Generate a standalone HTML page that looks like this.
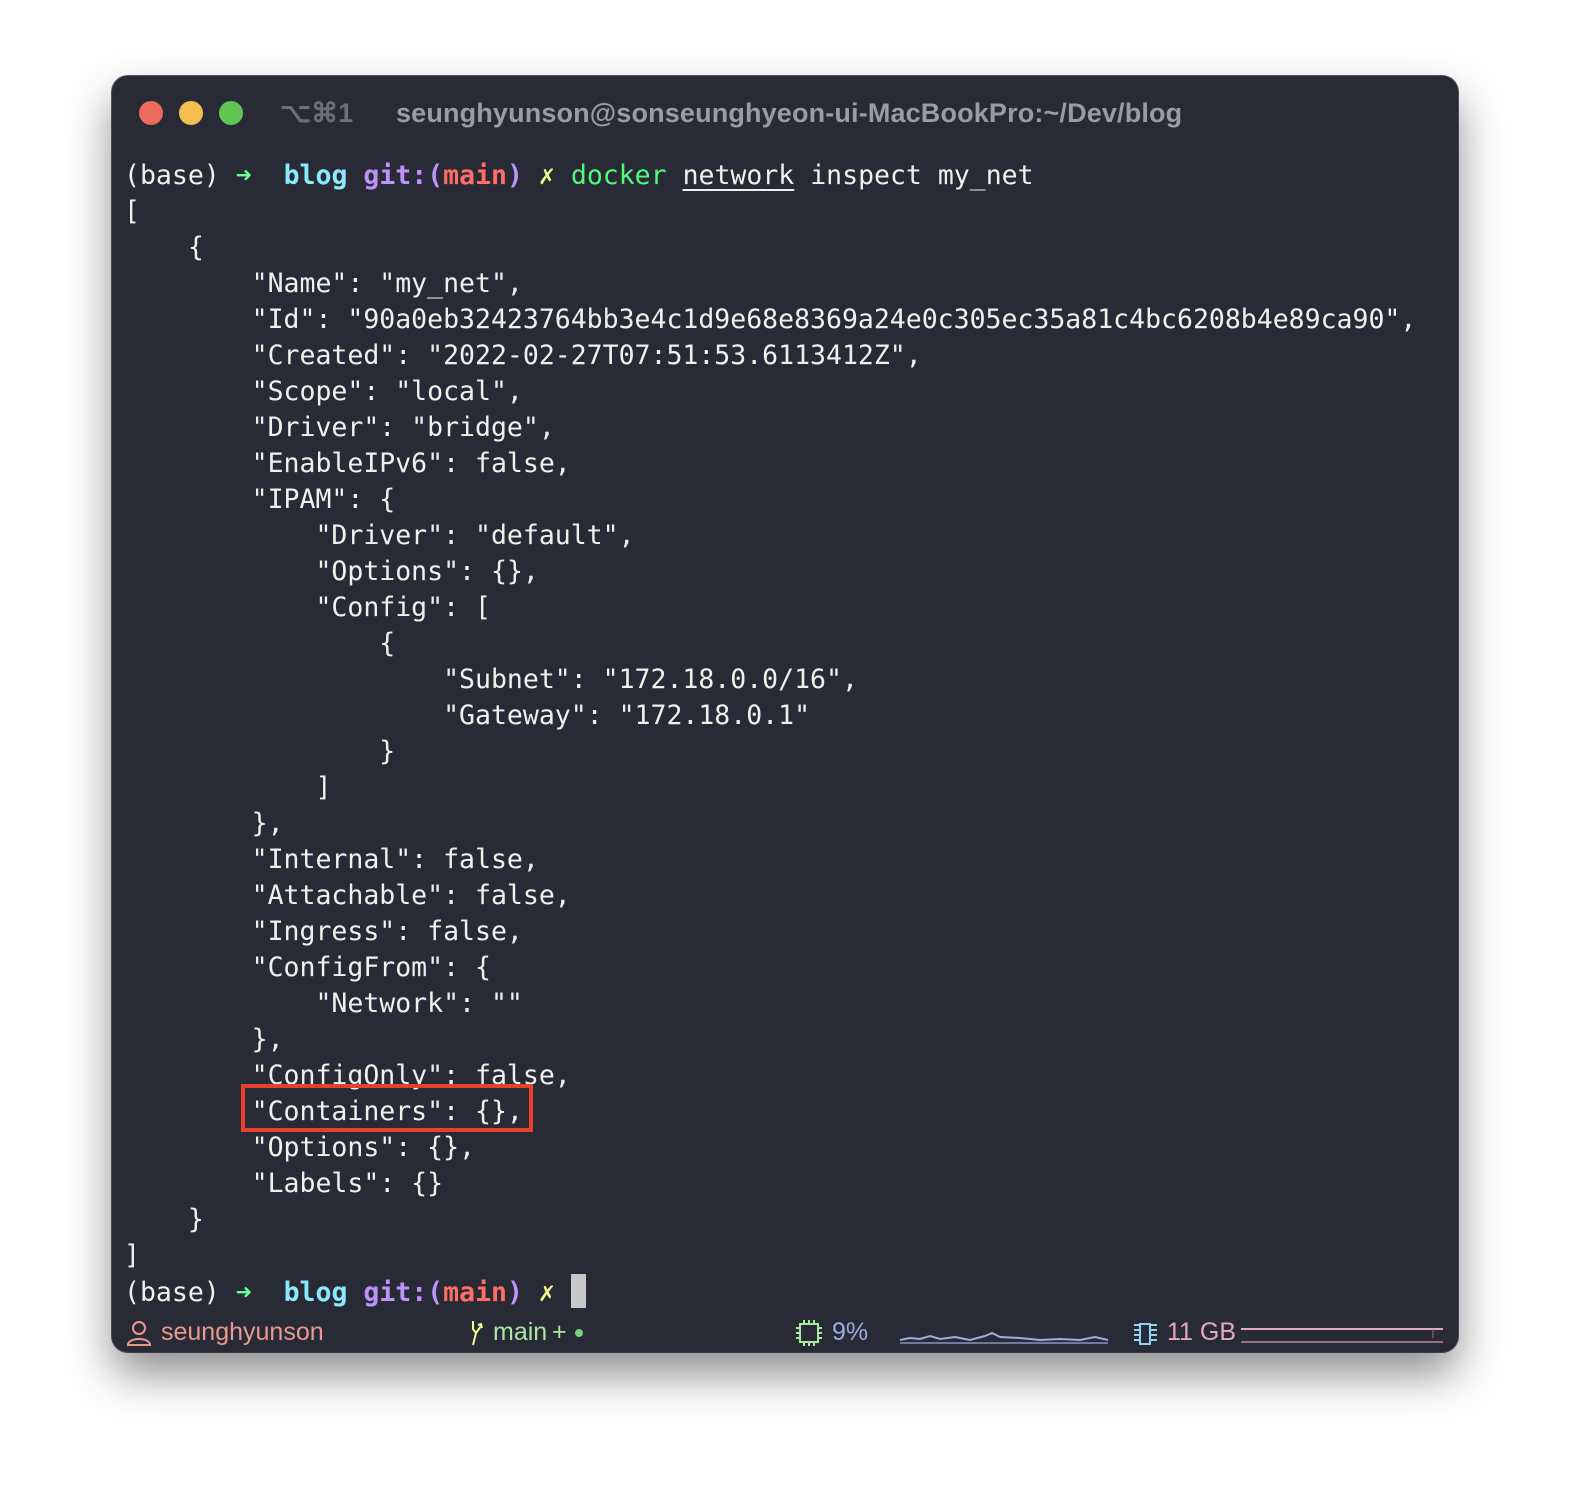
<!DOCTYPE html>
<html><head><meta charset="utf-8"><style>
html,body{margin:0;padding:0;background:#fff;}
body{width:1572px;height:1502px;position:relative;overflow:hidden;}
.win{position:absolute;left:112px;top:76px;width:1346px;height:1276px;background:#282a36;border-radius:16px;box-shadow:0 22px 45px rgba(0,0,0,0.45),0 0 0 1px #5a5c66;}
.dot{position:absolute;top:101px;width:24px;height:24px;border-radius:50%;}
.title{position:absolute;top:98px;font:bold 27px "Liberation Sans",sans-serif;color:#9a9ba3;white-space:pre;}
pre{position:absolute;left:124px;top:158px;margin:0;font:26.5px/36px "DejaVu Sans Mono","Liberation Mono",monospace;color:#f1f1ec;}
.c{color:#8be9fd;font-weight:bold}.p{color:#bd93f9;font-weight:bold}.r{color:#ff6e67;font-weight:bold}.y{color:#f1fa8c}.g{color:#50fa7b}.gr{color:#69ff94}
.box{position:absolute;left:241px;top:1084px;width:284px;height:40px;border:4px solid #e8402a;}
.cur{display:inline-block;width:15px;height:34px;background:#c8c8c8;vertical-align:-7px;}
.sb{position:absolute;top:1318px;font:25px "Liberation Sans",sans-serif;white-space:pre;}
</style></head><body>
<div class="win"></div>
<div class="dot" style="left:139px;background:#ed6a5e"></div>
<div class="dot" style="left:179px;background:#f5bf4f"></div>
<div class="dot" style="left:219px;background:#61c554"></div>
<div class="title" style="left:280px;color:#6d6e76">⌥⌘1</div>
<div class="title" style="left:396px;letter-spacing:0.15px">seunghyunson@sonseunghyeon-ui-MacBookPro:~/Dev/blog</div>
<pre>(base) <span class="gr">➜</span>  <span class="c">blog</span> <span class="p">git:(</span><span class="r">main</span><span class="p">)</span> <span class="y">✗</span> <span class="g">docker</span> <span style="text-decoration:underline;text-underline-offset:5px">network</span> inspect my_net
[
    {
        "Name": "my_net",
        "Id": "90a0eb32423764bb3e4c1d9e68e8369a24e0c305ec35a81c4bc6208b4e89ca90",
        "Created": "2022-02-27T07:51:53.6113412Z",
        "Scope": "local",
        "Driver": "bridge",
        "EnableIPv6": false,
        "IPAM": {
            "Driver": "default",
            "Options": {},
            "Config": [
                {
                    "Subnet": "172.18.0.0/16",
                    "Gateway": "172.18.0.1"
                }
            ]
        },
        "Internal": false,
        "Attachable": false,
        "Ingress": false,
        "ConfigFrom": {
            "Network": ""
        },
        "ConfigOnly": false,
        "Containers": {},
        "Options": {},
        "Labels": {}
    }
]
(base) <span class="gr">➜</span>  <span class="c">blog</span> <span class="p">git:(</span><span class="r">main</span><span class="p">)</span> <span class="y">✗</span> <span class="cur"></span></pre>
<div class="box"></div>
<svg style="position:absolute;left:126px;top:1320px" width="26" height="26" viewBox="0 0 26 26" fill="none" stroke="#e99a8e" stroke-width="2"><circle cx="13" cy="8" r="6"/><path d="M2 25 C2 17 24 17 24 25 Z"/></svg>
<div class="sb" style="left:161px;color:#e99a8e">seunghyunson</div>
<svg style="position:absolute;left:470px;top:1320px" width="16" height="26" viewBox="0 0 16 26" fill="none" stroke="#f1fa8c" stroke-width="2"><path d="M3 1 V9 L6 13 L3 25"/><path d="M6 13 L11 6 M8 5 L11 4 L12 8"/></svg>
<div class="sb" style="left:493px;color:#a9e9a0">main</div>
<div class="sb" style="left:552px;color:#a9e9a0">+</div>
<div style="position:absolute;left:575px;top:1329px;width:8px;height:8px;border-radius:50%;background:#7ad27a"></div>
<svg style="position:absolute;left:795px;top:1319px" width="28" height="28" viewBox="0 0 28 28" fill="none" stroke="#a9e9a0" stroke-width="2"><rect x="5" y="5" width="18" height="18"/><path d="M9 1v4M14 1v4M19 1v4M9 23v4M14 23v4M19 23v4M1 9h4M1 14h4M1 19h4M23 9h4M23 14h4M23 19h4"/></svg>
<div class="sb" style="left:832px;color:#9aaee0">9%</div>
<svg style="position:absolute;left:900px;top:1324px" width="208" height="20"><polyline fill="none" stroke="#9aaee0" stroke-width="2" points="0,16 10,14 20,15 30,12 40,15 55,13 70,16 85,12 92,9 100,13 120,14 140,16 160,15 180,16 195,13 208,16"/><line x1="0" y1="19" x2="208" y2="19" stroke="#6f7a99" stroke-width="2"/></svg>
<svg style="position:absolute;left:1133px;top:1322px" width="26" height="24" viewBox="0 0 26 24" fill="none" stroke="#8fd3f0" stroke-width="2"><rect x="7" y="2" width="10" height="20"/><path d="M1 3h5M1 8h5M1 13h5M1 18h5M18 3h6M18 8h6M18 13h6M18 18h6"/></svg>
<div class="sb" style="left:1167px;color:#e6a7c4">11 GB</div>
<svg style="position:absolute;left:1241px;top:1324px" width="202" height="20"><line x1="0" y1="5" x2="202" y2="5" stroke="#e6a7c4" stroke-width="2"/><line x1="0" y1="18" x2="202" y2="18" stroke="#9a6f87" stroke-width="2"/><line x1="192" y1="5" x2="192" y2="14" stroke="#9a6f87"/></svg>
</body></html>
